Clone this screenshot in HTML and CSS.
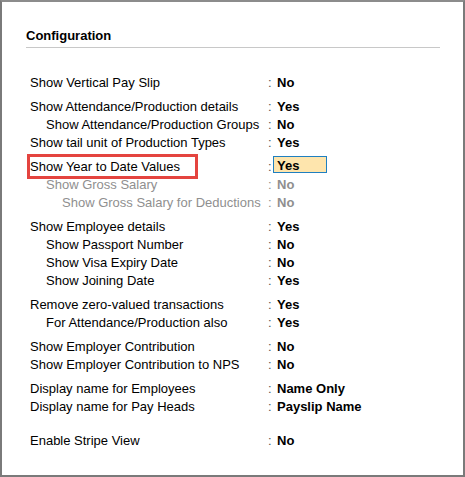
FILE: index.html
```html
<!DOCTYPE html>
<html>
<head>
<meta charset="utf-8">
<link rel="stylesheet" href="styles.css">
</head>
<body>
<div class="window">
  <div class="title">Configuration</div>
  <div class="groups">
    <div class="group">
      <div class="row"><span class="label l1">Show Vertical Pay Slip</span><span class="colon">:</span><span class="value">No</span></div>
    </div>
    <div class="group">
      <div class="row"><span class="label l1">Show Attendance/Production details</span><span class="colon">:</span><span class="value">Yes</span></div>
      <div class="row"><span class="label l2">Show Attendance/Production Groups</span><span class="colon">:</span><span class="value">No</span></div>
      <div class="row"><span class="label l1">Show tail unit of Production Types</span><span class="colon">:</span><span class="value">Yes</span></div>
    </div>
    <div class="group">
      <div class="row"><span class="label l1 marked">Show Year to Date Values<span class="mark"></span></span><span class="colon">:</span><span class="value field">Yes</span></div>
      <div class="row dim"><span class="label l2">Show Gross Salary</span><span class="colon">:</span><span class="value">No</span></div>
      <div class="row dim"><span class="label l3">Show Gross Salary for Deductions</span><span class="colon">:</span><span class="value">No</span></div>
    </div>
    <div class="group">
      <div class="row"><span class="label l1">Show Employee details</span><span class="colon">:</span><span class="value">Yes</span></div>
      <div class="row"><span class="label l2">Show Passport Number</span><span class="colon">:</span><span class="value">No</span></div>
      <div class="row"><span class="label l2">Show Visa Expiry Date</span><span class="colon">:</span><span class="value">No</span></div>
      <div class="row"><span class="label l2">Show Joining Date</span><span class="colon">:</span><span class="value">Yes</span></div>
    </div>
    <div class="group">
      <div class="row"><span class="label l1">Remove zero-valued transactions</span><span class="colon">:</span><span class="value">Yes</span></div>
      <div class="row"><span class="label l2">For Attendance/Production also</span><span class="colon">:</span><span class="value">Yes</span></div>
    </div>
    <div class="group">
      <div class="row"><span class="label l1">Show Employer Contribution</span><span class="colon">:</span><span class="value">No</span></div>
      <div class="row"><span class="label l1">Show Employer Contribution to NPS</span><span class="colon">:</span><span class="value">No</span></div>
    </div>
    <div class="group">
      <div class="row"><span class="label l1">Display name for Employees</span><span class="colon">:</span><span class="value">Name Only</span></div>
      <div class="row"><span class="label l1">Display name for Pay Heads</span><span class="colon">:</span><span class="value">Payslip Name</span></div>
    </div>
    <div class="group last">
      <div class="row"><span class="label l1">Enable Stripe View</span><span class="colon">:</span><span class="value">No</span></div>
    </div>
  </div>
</div>
</body>
</html>
```

FILE: styles.css
```css
html, body {
  margin: 0;
  padding: 0;
  background: #ffffff;
}

.window {
  box-sizing: border-box;
  width: 465px;
  height: 477px;
  border-top: 2px solid #8c8c8c;
  border-left: 2px solid #7a7a7a;
  border-right: 2px solid #7a7a7a;
  border-bottom: 2px solid #7a7a7a;
  padding: 25px 23px 0 24px;
  font-family: "Liberation Sans", Arial, sans-serif;
  font-size: 13px;
  color: #000;
}

.title {
  font-weight: bold;
  line-height: 18px;
  padding-bottom: 2px;
  border-bottom: 1px solid #c8c8c8;
  width: 414px;
}

.groups {
  display: flex;
  flex-direction: column;
  gap: 6px;
  padding-top: 26px;
  padding-left: 4px;
}

.group {
  display: flex;
  flex-direction: column;
}

.group.last {
  margin-top: 10px;
}

.row {
  display: flex;
  align-items: flex-start;
  height: 18px;
  line-height: 18px;
  white-space: nowrap;
}

.label {
  box-sizing: border-box;
  width: 238px;
  position: relative;
}

.l2 { padding-left: 16px; }
.l3 { padding-left: 32px; }

.colon {
  width: 9px;
  color: #555;
}

.value {
  font-weight: bold;
}

.dim .label,
.dim .value,
.dim .colon {
  color: #8f8f8f;
}

.field {
  box-sizing: border-box;
  width: 54px;
  height: 17px;
  line-height: 17px;
  margin-top: -2px;
  margin-left: -4px;
  padding-left: 3px;
  background: #fee5ad;
  border: 1px solid #1f7fc0;
}

.mark {
  position: absolute;
  left: -3px;
  top: -4px;
  width: 171px;
  height: 25px;
  box-sizing: border-box;
  border: 3px solid #e4443f;
}
```
